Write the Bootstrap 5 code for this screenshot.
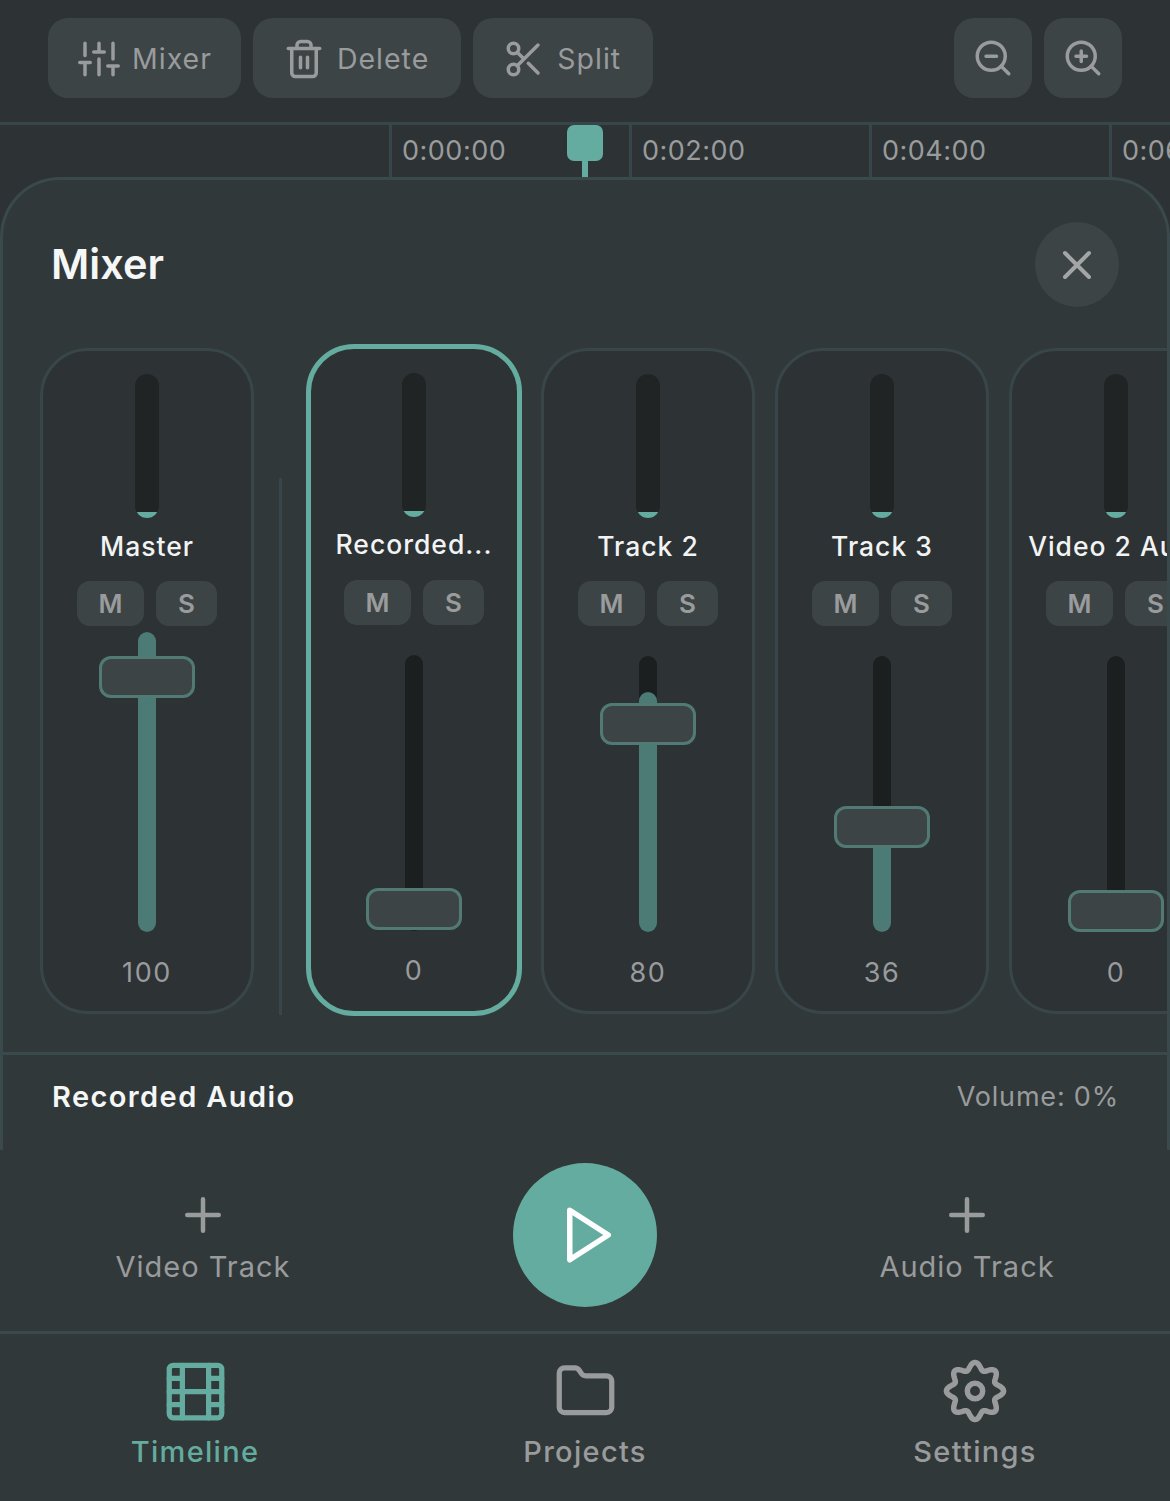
<!DOCTYPE html>
<html lang="en">
<head>
    <meta charset="UTF-8">
    <meta name="viewport" content="width=device-width, initial-scale=1.0">
    <title>Mixer</title>
    <link href="https://cdn.jsdelivr.net/npm/bootstrap@5.3.2/dist/css/bootstrap.min.css" rel="stylesheet">
    <style>
body {
    margin: 0;
    background-color: #2d3235;
    font-family: Inter, "Liberation Sans", sans-serif;
    color: #999b9c;
}

.app-shell {
    width: 1170px;
    height: 1501px;
    overflow: hidden;
}

svg.ico {
    fill: none;
    stroke: currentColor;
    stroke-width: 2;
    stroke-linecap: round;
    stroke-linejoin: round;
    flex-shrink: 0;
}

/* top bar */
.top-bar {
    height: 122px;
    padding: 18px 48px 0;
}

.tool-group {
    gap: 12px;
}

.tool-btn {
    height: 80px;
    padding: 2px 32px 0 30px;
    gap: 12px;
    background: #3d4446;
    border: 0;
    border-radius: 20px;
    color: #999b9c;
    font-size: 28.5px;
    letter-spacing: 1px;
    line-height: 1;
}

.tool-btn.tight {
    padding-right: 29px;
}

.tool-btn.square {
    width: 78px;
    padding: 0;
    justify-content: center;
}

/* ruler */
.ruler {
    height: 55px;
    border-top: 3px solid #37464a;
    padding-left: 389px;
    overflow: hidden;
}

.ruler-cell {
    width: 240px;
    flex-shrink: 0;
    border-left: 3px solid #37464a;
    padding-left: 10px;
    font-size: 27px;
    letter-spacing: 0.5px;
    line-height: 52px;
    white-space: nowrap;
}

.playhead {
    position: absolute;
    left: 567px;
    top: 0;
    width: 36px;
    height: 36px;
    background: #64ac9f;
    border-radius: 7px;
}

.playhead::after {
    content: "";
    position: absolute;
    left: 15px;
    top: 36px;
    width: 6px;
    height: 17px;
    background: #64ac9f;
}

/* mixer panel */
.mixer-panel {
    height: 973px;
    background: #313839;
    border: 3px solid #3a494c;
    border-bottom: 0;
    border-radius: 60px 60px 0 0;
    overflow: hidden;
}

.panel-head {
    padding: 42px 48px 0;
}

.panel-title {
    margin: 0;
    font-size: 41.5px;
    font-weight: 600;
    color: #f5f6f6;
    line-height: 1;
}

.close-round {
    width: 84px;
    height: 85px;
    padding: 0;
    background: #3d4446;
    border: 0;
    border-radius: 50%;
    color: #a3a5a6;
}

.strip-row {
    margin-top: 37px;
    padding-left: 37px;
    height: 672px;
}

.strip {
    width: 214px;
    height: 666px;
    flex-shrink: 0;
    margin-top: 2px;
    margin-right: 20px;
    padding-top: 23px;
    background: #2d3235;
    border: 3px solid #38464a;
    border-radius: 48px;
}

.strip.is-active {
    width: 216px;
    height: 672px;
    margin-top: 0;
    margin-right: 19px;
    padding-top: 24px;
    border: 5px solid #64ac9f;
}

.strip-gap {
    width: 3px;
    height: 537px;
    margin: 134px 24px 0 5px;
    flex-shrink: 0;
    background: #38464a;
}

.meter {
    position: relative;
    width: 24px;
    height: 144px;
    background: #202425;
    border-radius: 12px;
    overflow: hidden;
    flex-shrink: 0;
}

.meter-level {
    position: absolute;
    left: 0;
    right: 0;
    bottom: 0;
    height: 6px;
    background: #64ac9f;
}

.strip-name {
    margin-top: 11px;
    font-size: 26.5px;
    font-weight: 500;
    letter-spacing: 1px;
    line-height: 34px;
    color: #f2f3f3;
    white-space: nowrap;
}

.is-active .strip-name {
    margin-top: 10px;
}

.ms-btns {
    margin-top: 18px;
    gap: 12px;
}

.is-active .ms-btns {
    margin-top: 19px;
}

.ms-btn {
    height: 45px;
    padding: 0;
    background: #3d4446;
    border: 0;
    border-radius: 13px;
    color: #999b9c;
    font-size: 26px;
    font-weight: 600;
    line-height: 45px;
}

.ms-btn.m-key { width: 67px; }
.ms-btn.s-key { width: 61px; }

.fader {
    position: relative;
    width: 18px;
    height: 276px;
    margin-top: 30px;
    background: #1b1f20;
    border-radius: 9px;
    flex-shrink: 0;
}

.fader.is-full {
    height: 300px;
    margin-top: 6px;
}

.fader-fill {
    position: absolute;
    left: 0;
    right: 0;
    bottom: 0;
    background: #4c7b75;
    border-radius: 9px;
}

.fader-thumb {
    position: absolute;
    left: -39px;
    width: 96px;
    height: 42px;
    background: #3d4446;
    border: 3px solid #517a75;
    border-radius: 12px;
}

.strip-value {
    margin-top: 24px;
    font-size: 27px;
    letter-spacing: 1.6px;
    line-height: 34px;
}

.is-active .strip-value {
    margin-top: 23px;
}

.panel-foot {
    margin-top: 36px;
    border-top: 3px solid #3a494c;
    padding: 24px 48px 0 49px;
}

.foot-name {
    font-size: 29px;
    font-weight: 600;
    letter-spacing: 1.4px;
    color: #f5f6f6;
    line-height: 36px;
}

.foot-volume {
    font-size: 27px;
    letter-spacing: 0.8px;
    line-height: 36px;
}

/* transport */
.transport {
    height: 181px;
    background: #313839;
}

.add-track {
    flex: 1;
    padding: 38px 0 0;
    background: none;
    border: 0;
    color: #999b9c;
    gap: 7px;
    font-size: 29px;
    letter-spacing: 1px;
    line-height: 36px;
}

.play-slot {
    width: 358px;
    padding-top: 13px;
}

.play-round {
    width: 144px;
    height: 144px;
    padding: 0 0 0 8px;
    background: #64ac9f;
    border: 0;
    border-radius: 50%;
    color: #fff;
}

/* bottom nav */
.bottom-nav {
    height: 170px;
    background: #313839;
    border-top: 3px solid #3a494c;
}

.nav-entry {
    padding-top: 24px;
    gap: 10px;
    color: #999b9c;
    font-size: 29px;
    font-weight: 500;
    letter-spacing: 1.3px;
    line-height: 36px;
    text-decoration: none;
}

.nav-entry svg.nav-ico-sm {
    margin: 1.5px 0;
}

.nav-entry.is-current {
    color: #64ac9f;
}
    </style>
</head>
<body>
<div class="app-shell d-flex flex-column">
    <div class="top-bar d-flex justify-content-between flex-shrink-0">
        <div class="d-flex tool-group">
            <button type="button" class="btn tool-btn tight d-flex align-items-center">
                <svg class="ico" width="42" height="42" viewBox="0 0 24 24"><path d="M4 21v-7M4 10V3M12 21v-9M12 8V3M20 21v-5M20 12V3M1 14h6M9 8h6M17 16h6"/></svg>
                Mixer
            </button>
            <button type="button" class="btn tool-btn d-flex align-items-center">
                <svg class="ico" width="42" height="42" viewBox="0 0 24 24"><path d="M3 6h18M19 6v14c0 1-1 2-2 2H7c-1 0-2-1-2-2V6M8 6V4c0-1 1-2 2-2h4c1 0 2 1 2 2v2M10 11v6M14 11v6"/></svg>
                Delete
            </button>
            <button type="button" class="btn tool-btn d-flex align-items-center">
                <svg class="ico" width="42" height="42" viewBox="0 0 24 24"><circle cx="6" cy="6" r="3"/><circle cx="6" cy="18" r="3"/><path d="M20 4 8.12 15.88M14.47 14.48 20 20M8.12 8.12 12 12"/></svg>
                Split
            </button>
        </div>
        <div class="d-flex tool-group">
            <button type="button" class="btn tool-btn square d-flex align-items-center" aria-label="Zoom out">
                <svg class="ico" width="42" height="42" viewBox="0 0 24 24"><circle cx="11" cy="11" r="8"/><path d="m21 21-4.35-4.35M8 11h6"/></svg>
            </button>
            <button type="button" class="btn tool-btn square d-flex align-items-center" aria-label="Zoom in">
                <svg class="ico" width="42" height="42" viewBox="0 0 24 24"><circle cx="11" cy="11" r="8"/><path d="m21 21-4.35-4.35M11 8v6M8 11h6"/></svg>
            </button>
        </div>
    </div>

    <div class="ruler d-flex position-relative flex-shrink-0">
        <div class="ruler-cell">0:00:00</div>
        <div class="ruler-cell">0:02:00</div>
        <div class="ruler-cell">0:04:00</div>
        <div class="ruler-cell">0:06:00</div>
        <div class="playhead"></div>
    </div>

    <div class="mixer-panel flex-shrink-0">
        <div class="panel-head d-flex justify-content-between align-items-center">
            <h2 class="panel-title">Mixer</h2>
            <button type="button" class="btn close-round d-flex align-items-center justify-content-center" aria-label="Close">
                <svg class="ico" width="48" height="48" viewBox="0 0 24 24"><path d="M18 6 6 18M6 6l12 12"/></svg>
            </button>
        </div>

        <div class="strip-row d-flex align-items-center">
            <div class="strip d-flex flex-column align-items-center">
                <div class="meter"><div class="meter-level"></div></div>
                <div class="strip-name">Master</div>
                <div class="ms-btns d-flex">
                    <button type="button" class="btn ms-btn m-key">M</button>
                    <button type="button" class="btn ms-btn s-key">S</button>
                </div>
                <div class="fader is-full">
                    <div class="fader-fill" style="height:300px"></div>
                    <div class="fader-thumb" style="bottom:234px"></div>
                </div>
                <div class="strip-value">100</div>
            </div>
            <div class="strip-gap align-self-start"></div>
            <div class="strip is-active d-flex flex-column align-items-center">
                <div class="meter"><div class="meter-level"></div></div>
                <div class="strip-name">Recorded...</div>
                <div class="ms-btns d-flex">
                    <button type="button" class="btn ms-btn m-key">M</button>
                    <button type="button" class="btn ms-btn s-key">S</button>
                </div>
                <div class="fader">
                    <div class="fader-thumb" style="bottom:1px"></div>
                </div>
                <div class="strip-value">0</div>
            </div>
            <div class="strip d-flex flex-column align-items-center">
                <div class="meter"><div class="meter-level"></div></div>
                <div class="strip-name">Track 2</div>
                <div class="ms-btns d-flex">
                    <button type="button" class="btn ms-btn m-key">M</button>
                    <button type="button" class="btn ms-btn s-key">S</button>
                </div>
                <div class="fader">
                    <div class="fader-fill" style="height:240px"></div>
                    <div class="fader-thumb" style="bottom:187px"></div>
                </div>
                <div class="strip-value">80</div>
            </div>
            <div class="strip d-flex flex-column align-items-center">
                <div class="meter"><div class="meter-level"></div></div>
                <div class="strip-name">Track 3</div>
                <div class="ms-btns d-flex">
                    <button type="button" class="btn ms-btn m-key">M</button>
                    <button type="button" class="btn ms-btn s-key">S</button>
                </div>
                <div class="fader">
                    <div class="fader-fill" style="height:108px"></div>
                    <div class="fader-thumb" style="bottom:84px"></div>
                </div>
                <div class="strip-value">36</div>
            </div>
            <div class="strip d-flex flex-column align-items-center">
                <div class="meter"><div class="meter-level"></div></div>
                <div class="strip-name">Video 2 Au...</div>
                <div class="ms-btns d-flex">
                    <button type="button" class="btn ms-btn m-key">M</button>
                    <button type="button" class="btn ms-btn s-key">S</button>
                </div>
                <div class="fader">
                    <div class="fader-thumb" style="bottom:0"></div>
                </div>
                <div class="strip-value">0</div>
            </div>
        </div>

        <div class="panel-foot d-flex justify-content-between align-items-center">
            <div class="foot-name">Recorded Audio</div>
            <div class="foot-volume">Volume: 0%</div>
        </div>
    </div>

    <div class="transport d-flex flex-shrink-0">
        <button type="button" class="add-track d-flex flex-column align-items-center">
            <svg class="ico" width="54" height="54" viewBox="0 0 24 24"><path d="M12 5v14M5 12h14"/></svg>
            Video Track
        </button>
        <div class="play-slot d-flex justify-content-center">
            <button type="button" class="btn play-round d-flex align-items-center justify-content-center" aria-label="Play">
                <svg class="ico" width="66" height="66" viewBox="0 0 24 24"><path d="M5 3l14 9-14 9V3z"/></svg>
            </button>
        </div>
        <button type="button" class="add-track d-flex flex-column align-items-center">
            <svg class="ico" width="54" height="54" viewBox="0 0 24 24"><path d="M12 5v14M5 12h14"/></svg>
            Audio Track
        </button>
    </div>

    <div class="bottom-nav row g-0 flex-shrink-0">
        <a href="#" class="nav-entry is-current col-4 d-flex flex-column align-items-center">
            <svg class="ico nav-ico-sm" width="63" height="63" viewBox="0 0 24 24"><rect x="2" y="2" width="20" height="20" rx="1.5"/><path d="M7 2v20M17 2v20M2 12h20M2 7h5M2 17h5M17 17h5M17 7h5"/></svg>
            Timeline
        </a>
        <a href="#" class="nav-entry col-4 d-flex flex-column align-items-center">
            <svg class="ico nav-ico-sm" width="63" height="63" viewBox="0 0 24 24"><path d="M20 20a2 2 0 0 0 2-2V8a2 2 0 0 0-2-2h-7.9a2 2 0 0 1-1.69-.9L9.6 3.9A2 2 0 0 0 7.93 3H4a2 2 0 0 0-2 2v13a2 2 0 0 0 2 2Z"/></svg>
            Projects
        </a>
        <a href="#" class="nav-entry col-4 d-flex flex-column align-items-center">
            <svg class="ico" width="66" height="66" viewBox="0 0 24 24"><path id="gearPath" d=""/><circle cx="12" cy="12" r="2.8"/></svg>
            Settings
        </a>
    </div>
</div>
<script src="https://cdn.jsdelivr.net/npm/bootstrap@5.3.2/dist/js/bootstrap.bundle.min.js"></script>
<script>
    // wavy 8 tooth gear outline
    var pts = [];
    for (var i = 0; i < 160; i++) {
        var a = i / 160 * Math.PI * 2;
        var r = 9.1 + 1.3 * Math.cos(8 * a);
        pts.push((12 + r * Math.sin(a)).toFixed(2) + ' ' + (12 - r * Math.cos(a)).toFixed(2));
    }
    document.getElementById('gearPath').setAttribute('d', 'M' + pts.join('L') + 'Z');
</script>
</body>
</html>
